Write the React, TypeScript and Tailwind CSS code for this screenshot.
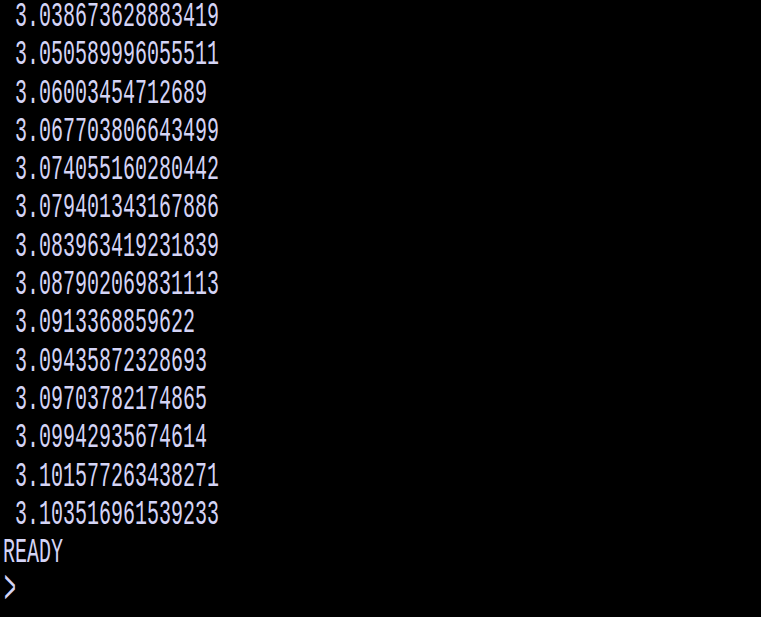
const lines = [
  " 3.038673628883419",
  " 3.050589996055511",
  " 3.06003454712689",
  " 3.067703806643499",
  " 3.074055160280442",
  " 3.079401343167886",
  " 3.083963419231839",
  " 3.087902069831113",
  " 3.0913368859622",
  " 3.09435872328693",
  " 3.09703782174865",
  " 3.09942935674614",
  " 3.101577263438271",
  " 3.103516961539233",
  "READY",
];

function Line({ text }: { text: string }) {
  return (
    <div className="h-[38.3px] whitespace-pre">
      <span className="block origin-top scale-y-[1.75] leading-[20px]">{text}</span>
    </div>
  );
}

export default function App() {
  return (
    <main className="h-[617px] w-full overflow-hidden bg-black pl-[3px] text-[20px] text-[#d4d4f6] font-['Liberation_Mono',monospace]">
      {lines.map((l, i) => (
        <Line key={i} text={l} />
      ))}
      {/* prompt */}
      <div className="h-[38.3px] pl-[1px]">
        <span className="block origin-top scale-y-[2.4] leading-[14px]">&gt;</span>
      </div>
    </main>
  );
}
